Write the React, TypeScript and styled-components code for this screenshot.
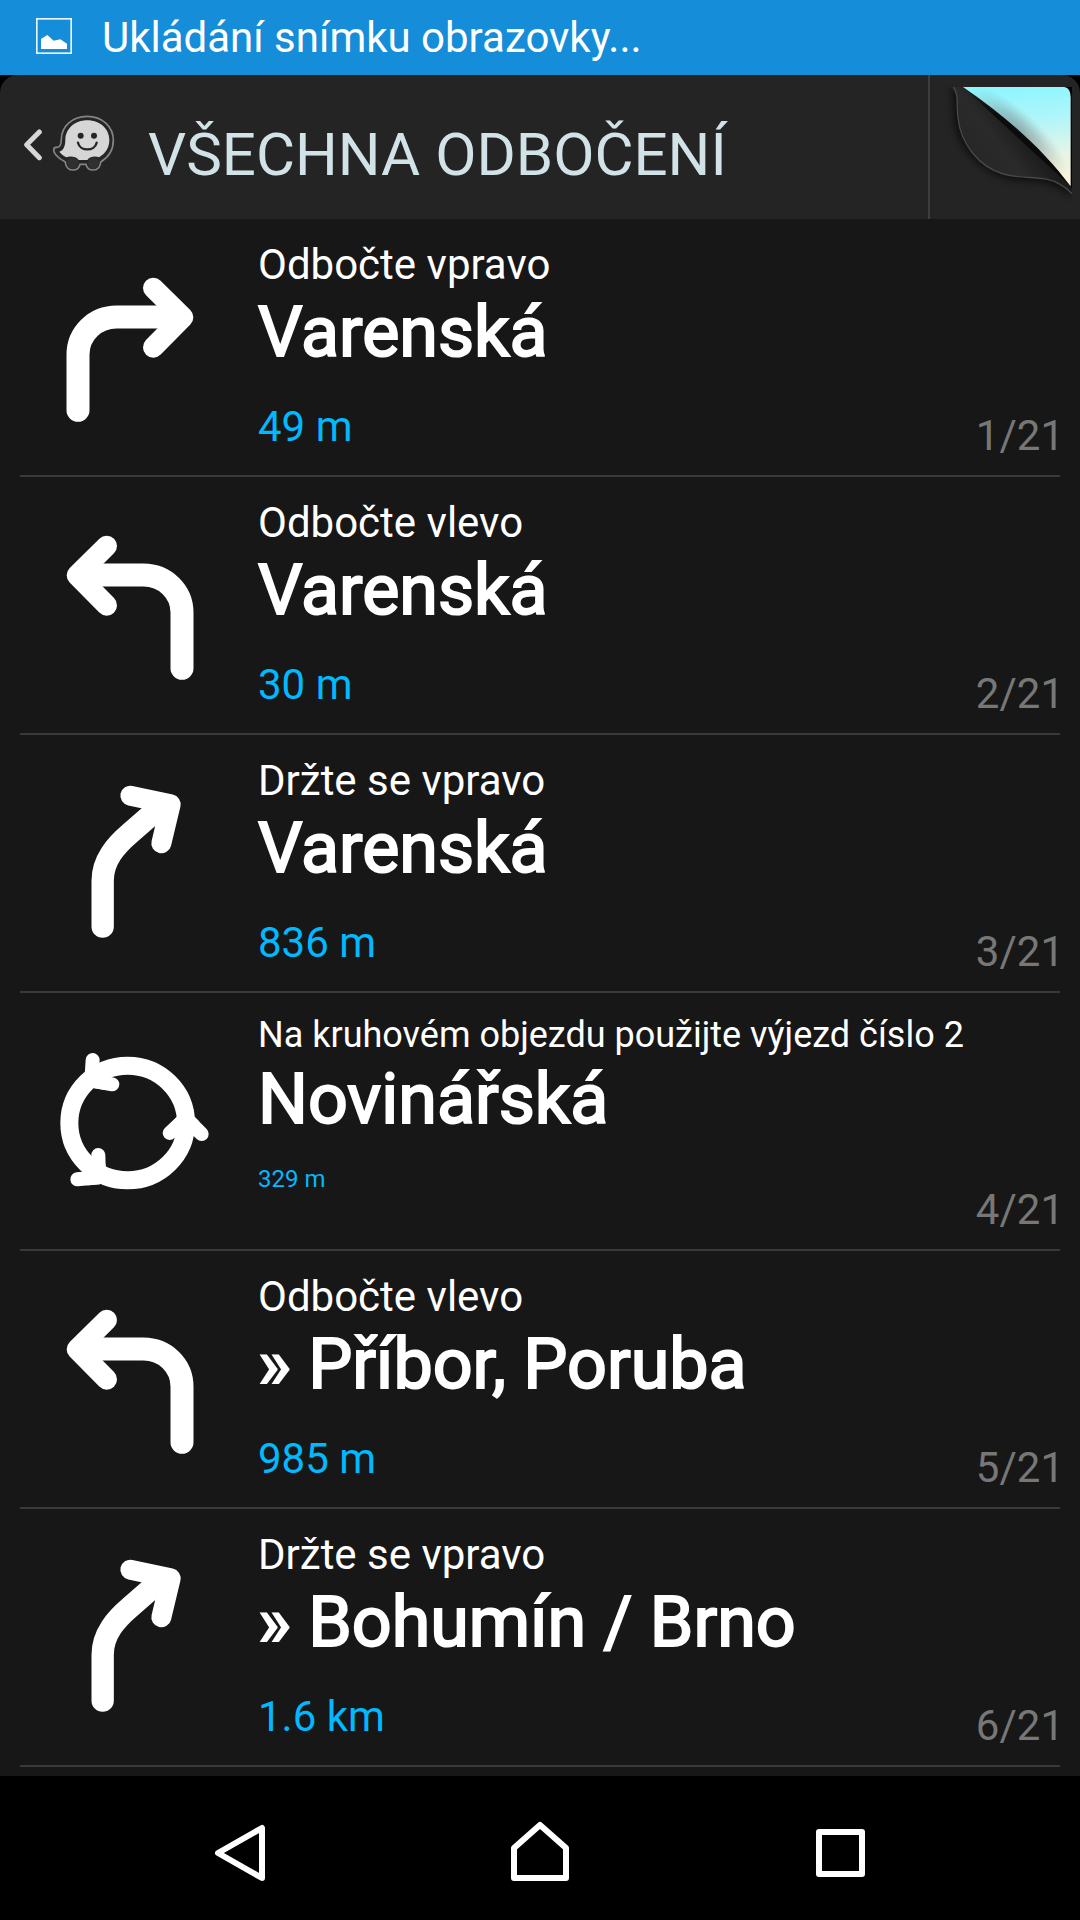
import React from "react";
import styled, { createGlobalStyle } from "styled-components";

const GlobalStyle = createGlobalStyle`
  *, *::before, *::after { box-sizing: border-box; }
  body {
    margin: 0;
    background: #000;
    font-family: Roboto, "Noto Sans", sans-serif;
  }
`;

const Screen = styled.div`
  display: flex;
  flex-direction: column;
  min-height: 100vh;
  background: #000;
  color: #fff;
`;

const StatusBar = styled.div`
  display: flex;
  align-items: center;
  gap: 30px;
  height: 75px;
  padding: 0 36px 3px;
  background: #158dd8;
`;

const StatusText = styled.span`
  padding-top: 2px;
  font-size: 42px;
  line-height: 49px;
  white-space: nowrap;
`;

const Header = styled.header`
  display: flex;
  height: 144px;
  background: #242424;
  border-radius: 18px 18px 0 0;
`;

const IconButton = styled.button`
  display: flex;
  align-items: center;
  justify-content: center;
  margin: 0;
  padding: 0;
  border: 0;
  background: none;
  color: inherit;
  cursor: pointer;
`;

const BackButton = styled(IconButton)`
  gap: 10px;
  padding: 0 0 8px 24px;
`;

const Title = styled.h1`
  flex: 1;
  margin: 0;
  padding: 16px 0 0 32px;
  align-self: center;
  color: #d2e3e8;
  font-size: 60px;
  font-weight: 400;
  line-height: 70px;
  white-space: nowrap;
`;

const MapButton = styled(IconButton)`
  width: 152px;
  padding: 12px 8px 12px 0;
  border-left: 2px solid #3e3e3e;
  align-items: flex-start;
  justify-content: flex-end;
`;

const TurnList = styled.ol`
  flex: 1;
  margin: 0;
  padding: 0 20px 9px;
  background: #171717;
  list-style: none;
`;

const TurnRow = styled.li`
  display: grid;
  grid-template-columns: 238px 1fr auto;
  height: 258px;
  border-bottom: 2px solid #3a3a3a;
`;

const TurnIcon = styled.div`
  display: flex;
  align-items: center;
  padding-left: 30px;
`;

const TurnText = styled.div`
  padding-top: 21px;
  white-space: nowrap;
  min-width: 0;
`;

const Instruction = styled.div<{ $compact?: boolean }>`
  font-size: ${(p) => (p.$compact ? 36 : 42)}px;
  line-height: ${(p) => (p.$compact ? 42 : 49)}px;
`;

const Street = styled.div`
  font-size: 70px;
  line-height: 86px;
  -webkit-text-stroke: 2px #fff;
`;

const Distance = styled.div<{ $compact?: boolean }>`
  margin-top: ${(p) => (p.$compact ? 23 : 27)}px;
  color: #00b9ff;
  font-size: ${(p) => (p.$compact ? 24 : 42)}px;
  line-height: ${(p) => (p.$compact ? 28 : 49)}px;
`;

const Counter = styled.div`
  align-self: end;
  margin-right: -4px;
  padding-bottom: 15px;
  color: #777;
  font-size: 42px;
  line-height: 49px;
`;

const NavBar = styled.nav`
  display: grid;
  grid-template-columns: repeat(3, 1fr);
  height: 144px;
  padding: 0 90px;
  background: #000;
`;

type TurnKind = "right" | "left" | "keepRight" | "roundabout";

interface Turn {
  kind: TurnKind;
  instruction: string;
  street: string;
  distance: string;
  compact?: boolean;
}

const TOTAL = 21;

const turns: Turn[] = [
  { kind: "right", instruction: "Odbočte vpravo", street: "Varenská", distance: "49 m" },
  { kind: "left", instruction: "Odbočte vlevo", street: "Varenská", distance: "30 m" },
  { kind: "keepRight", instruction: "Držte se vpravo", street: "Varenská", distance: "836 m" },
  {
    kind: "roundabout",
    instruction: "Na kruhovém objezdu použijte výjezd číslo 2",
    street: "Novinářská",
    distance: "329 m",
    compact: true,
  },
  { kind: "left", instruction: "Odbočte vlevo", street: "» Příbor, Poruba", distance: "985 m" },
  { kind: "keepRight", instruction: "Držte se vpravo", street: "» Bohumín / Brno", distance: "1.6 km" },
];

const TurnArrow = () => (
  <>
    <path d="M84 445V278C84 215 135 165 200 165H385" strokeWidth="69" />
    <path d="M310 78L399 166L310 256" strokeWidth="62" />
  </>
);

function TurnDrawing({ kind }: { kind: TurnKind }) {
  return (
    <svg
      width="170"
      height="170"
      viewBox="0 0 510 510"
      fill="none"
      stroke="#fff"
      strokeLinecap="round"
      strokeLinejoin="round"
      aria-hidden="true"
    >
      {kind === "right" && <TurnArrow />}
      {kind === "left" && (
        <g transform="translate(480 0) scale(-1 1)">
          <TurnArrow />
        </g>
      )}
      {kind === "keepRight" && (
        <>
          <path d="M158 446V308C158 246 198 202 240 166L322 94" strokeWidth="67" />
          <path d="M241 53L362 79L334 196" strokeWidth="60" />
        </>
      )}
      {kind === "roundabout" && (
        <>
          <ellipse cx="233" cy="261" rx="175" ry="172" strokeWidth="54" />
          <path d="M128 72L124 134L187 145" strokeWidth="42" />
          <path d="M359 291L407 246L455 294" strokeWidth="42" />
          <path d="M145 357L147 424L82 430" strokeWidth="42" />
          <path d="M128 110L124 134L160 140Z" strokeWidth="42" />
          <path d="M385 268L407 246L430 268Z" strokeWidth="42" />
          <path d="M146 390L147 424L115 427Z" strokeWidth="42" />
        </>
      )}
    </svg>
  );
}

const PictureIcon = () => (
  <svg width="36" height="36" viewBox="0 0 108 108" aria-hidden="true">
    <rect x="2.5" y="2.5" width="103" height="103" fill="none" stroke="#fff" strokeWidth="5" opacity="0.9" />
    <path d="M15 93V63L34 51L53 68L73 64L93 77V93Z" fill="#fff" />
  </svg>
);

const Chevron = () => (
  <svg width="18" height="36" viewBox="0 0 54 108" aria-hidden="true">
    <path d="M46 21L8 59L46 98" fill="none" stroke="#d6d6d6" strokeWidth="15" strokeLinecap="round" strokeLinejoin="round" />
  </svg>
);

const WazeLogo = () => (
  <svg width="64" height="56" viewBox="156 346 192 168" aria-hidden="true">
    <path
      d="M262 350C217 350 185 380 184 418C184 435 180 444 168 443C158 444 160 458 168 466C176 476 186 482 196 487C196 501 205 511 218 511C230 511 238 505 240 494H258C260 505 268 511 280 511C293 511 302 501 302 487C326 473 340 450 340 422C340 380 306 350 262 350Z"
      fill="#262626"
      stroke="#858585"
      strokeWidth="5"
    />
    <path
      d="M262 362C224 362 197 387 196 420C196 438 191 452 178 456C184 463 191 469 199 473C210 469 228 470 236 481H262C270 469 288 469 297 473C316 462 328 444 328 421C328 387 299 362 262 362Z"
      fill="#d6d6d6"
    />
    <circle cx="242" cy="408" r="9" fill="#262626" />
    <circle cx="282" cy="408" r="9" fill="#262626" />
    <path d="M234 429C240 456 284 456 290 429" fill="none" stroke="#262626" strokeWidth="7" strokeLinecap="round" />
    <circle cx="218" cy="490" r="17" fill="#303030" />
    <circle cx="280" cy="490" r="17" fill="#303030" />
  </svg>
);

const PageCurl = () => (
  <svg width="135" height="120" viewBox="111 81 405 360" aria-hidden="true">
    <defs>
      <linearGradient id="sky" gradientUnits="userSpaceOnUse" x1="400" y1="81" x2="430" y2="370">
        <stop offset="0" stopColor="#8ff6ff" />
        <stop offset="0.35" stopColor="#b2f5f9" />
        <stop offset="0.7" stopColor="#e4f5e8" />
        <stop offset="1" stopColor="#fbf3d8" />
      </linearGradient>
      <radialGradient
        id="fold"
        gradientUnits="userSpaceOnUse"
        cx="0"
        cy="0"
        r="100"
        gradientTransform="translate(355 215) rotate(42) scale(1.9 0.6)"
      >
        <stop offset="0" stopColor="#555" stopOpacity="0.5" />
        <stop offset="0.5" stopColor="#666" stopOpacity="0.3" />
        <stop offset="1" stopColor="#888" stopOpacity="0" />
      </radialGradient>
      <linearGradient id="flap" gradientUnits="userSpaceOnUse" x1="215" y1="280" x2="345" y2="180">
        <stop offset="0" stopColor="#272727" />
        <stop offset="0.5" stopColor="#2a2a2a" />
        <stop offset="1" stopColor="#1b1b1b" />
      </linearGradient>
      <filter id="soft" x="-20%" y="-20%" width="140%" height="140%">
        <feGaussianBlur stdDeviation="12" />
      </filter>
    </defs>
    <path
      d="M150 81C172 115 156 160 171 210C190 276 254 338 324 354C385 366 430 352 480 384Q502 395 516 410L516 330L300 150Z"
      fill="#000"
      opacity="0.7"
      filter="url(#soft)"
    />
    <path d="M488 81H516V382H512Z" fill="#000" />
    <path
      d="M160 81C178 107 168 130 174 174C182 250 235 320 310 342C375 361 430 342 481 374Q502 385 516 401L512 379L189 81Z"
      fill="url(#flap)"
    />
    <path
      d="M160 81C178 107 168 130 174 174C182 250 235 320 310 342C375 361 430 342 481 374Q502 385 516 401"
      fill="none"
      stroke="#484848"
      strokeWidth="4"
    />
    <path d="M189 81H493Q512 84 512 112V379C430 268 320 170 189 81Z" fill="url(#sky)" />
    <path d="M189 81H493Q512 84 512 112V379C430 268 320 170 189 81Z" fill="url(#fold)" />
  </svg>
);

const NavIcon = ({ d }: { d: string }) => (
  <svg
    width="72"
    height="72"
    viewBox="0 0 72 72"
    fill="none"
    stroke="#fff"
    strokeWidth="6"
    strokeLinecap="round"
    strokeLinejoin="round"
    aria-hidden="true"
  >
    <path d={d} />
  </svg>
);

const navItems = [
  { label: "Zpět", d: "M58 16V66L14 41Z" },
  { label: "Domů", d: "M10 36L36 13L62 36V66H10Z" },
  { label: "Poslední aplikace", d: "M15 20H58V62H15Z" },
];

export default function App() {
  return (
    <Screen>
      <GlobalStyle />
      <StatusBar>
        <PictureIcon />
        <StatusText>Ukládání snímku obrazovky...</StatusText>
      </StatusBar>
      <Header>
        <BackButton type="button" aria-label="Zpět do Waze">
          <Chevron />
          <WazeLogo />
        </BackButton>
        <Title>VŠECHNA ODBOČENÍ</Title>
        <MapButton type="button" aria-label="Mapa">
          <PageCurl />
        </MapButton>
      </Header>
      <TurnList>
        {turns.map((turn, i) => (
          <TurnRow key={i}>
            <TurnIcon>
              <TurnDrawing kind={turn.kind} />
            </TurnIcon>
            <TurnText>
              <Instruction $compact={turn.compact}>{turn.instruction}</Instruction>
              <Street>{turn.street}</Street>
              <Distance $compact={turn.compact}>{turn.distance}</Distance>
            </TurnText>
            <Counter>{`${i + 1}/${TOTAL}`}</Counter>
          </TurnRow>
        ))}
      </TurnList>
      <NavBar>
        {navItems.map((item) => (
          <IconButton key={item.label} type="button" aria-label={item.label}>
            <NavIcon d={item.d} />
          </IconButton>
        ))}
      </NavBar>
    </Screen>
  );
}
